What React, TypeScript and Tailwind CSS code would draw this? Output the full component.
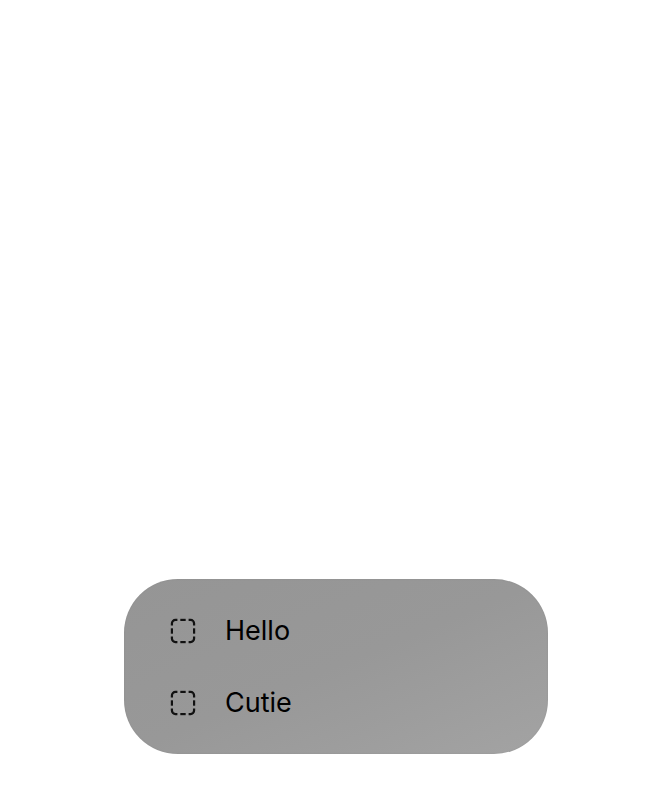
const DashedSquare = () => (
  <svg
    width="28"
    height="28"
    viewBox="0 0 24 24"
    fill="none"
    stroke="#111"
    strokeWidth="1.9"
    strokeLinecap="butt"
    className="shrink-0"
  >
    <path d="M2.5 7.2V5.5a3 3 0 0 1 3-3h1.7" />
    <path d="M16.8 2.5h1.7a3 3 0 0 1 3 3v1.7" />
    <path d="M21.5 16.8v1.7a3 3 0 0 1-3 3h-1.7" />
    <path d="M7.2 21.5H5.5a3 3 0 0 1-3-3v-1.7" />
    <path d="M9.7 2.5h4.6" />
    <path d="M9.7 21.5h4.6" />
    <path d="M2.5 9.7v4.6" />
    <path d="M21.5 9.7v4.6" />
  </svg>
);

const items = ["Hello", "Cutie"];

export default function App() {
  return (
    <div className="h-[800px] w-full bg-white flex flex-col justify-end pb-[46px]">
      <div className="ml-[124px] w-[424px] h-[175px] rounded-[54px] bg-gradient-to-br from-[#959595] via-[#989898] to-[#a3a3a3] flex flex-col justify-center gap-[44px] pl-[45px] shadow-[inset_0_0_2px_rgba(0,0,0,0.08)]">
        {items.map((label) => (
          <div key={label} className="flex items-center gap-[28px] h-[28px]">
            <DashedSquare />
            <span className="font-['Inter','Liberation_Sans',sans-serif] text-[27px] leading-none text-black">
              {label}
            </span>
          </div>
        ))}
      </div>
    </div>
  );
}
